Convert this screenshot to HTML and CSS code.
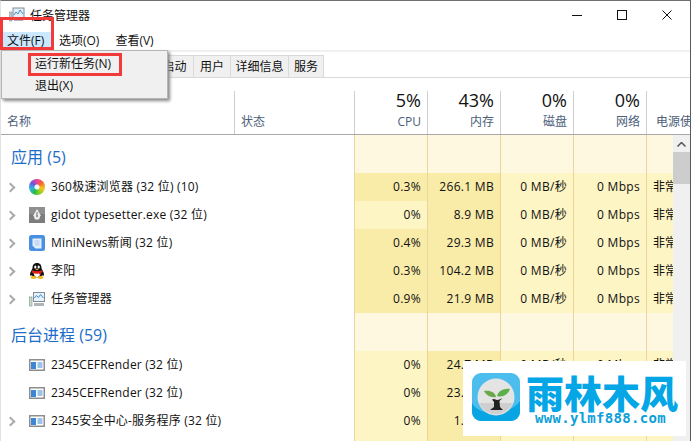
FILE: index.html
```html
<!DOCTYPE html>
<html lang="zh-CN">
<head>
    <meta charset="UTF-8">
    <meta name="viewport" content="width=device-width, initial-scale=1.0">
    <title>任务管理器</title>
    <link rel="stylesheet" href="styles.css">
</head>
<body>
<div class="window">
    <div class="title-bar">
        <svg class="app-icon" width="16" height="16" viewBox="0 0 16 16">
            <rect x="4" y="1" width="11" height="10" fill="#e4eef6" stroke="#7f8c99"/>
            <path d="M5 8l2-3 2 2 2-4 3 4" fill="none" stroke="#3f8fd0"/>
            <rect x="0" y="5" width="3" height="9" fill="#c3c7cb" stroke="#7f8c99" stroke-width=".6"/>
            <rect x="5" y="12" width="9" height="2" fill="#b0b6bc"/>
        </svg>
        <span class="title-text">任务管理器</span>
        <div class="win-btns">
            <svg width="10" height="10" viewBox="0 0 10 10"><path d="M0 5.5h10" stroke="#111"/></svg>
            <svg width="10" height="10" viewBox="0 0 10 10"><rect x=".5" y=".5" width="9" height="9" fill="none" stroke="#111"/></svg>
            <svg width="10" height="10" viewBox="0 0 10 10"><path d="M.5 .5l9 9M9.5 .5l-9 9" stroke="#111"/></svg>
        </div>
    </div>

    <div class="menu-bar">
        <span class="menu-item menu-open">文件(F)</span>
        <span class="menu-item">选项(O)</span>
        <span class="menu-item">查看(V)</span>
    </div>

    <div class="tabs">
        <span class="tab">进程</span>
        <span class="tab">性能</span>
        <span class="tab">应用历史</span>
        <span class="tab">启动</span>
        <span class="tab">用户</span>
        <span class="tab">详细信息</span>
        <span class="tab">服务</span>
    </div>

    <div class="table-head">
        <div class="head-cell head-name">名称</div>
        <div class="head-cell head-status">状态</div>
        <div class="head-cell head-num"><b>5%</b>CPU</div>
        <div class="head-cell head-num"><b>43%</b>内存</div>
        <div class="head-cell head-num"><b>0%</b>磁盘</div>
        <div class="head-cell head-num"><b>0%</b>网络</div>
        <div class="head-cell head-power">电源使用情况</div>
    </div>

    <div class="table-wrap">
        <div class="rows">
            <div class="row group-row">
                <div class="name group-title">应用 (5)</div>
                <div></div>
                <div class="num"></div><div class="num"></div><div class="num"></div><div class="num"></div><div class="num"></div>
            </div>

            <div class="row">
                <div class="name"><i class="arrow"></i>
                    <span class="icon-360"></span>
                    <span class="label">360极速浏览器 (32 位) (10)</span></div>
                <div></div>
                <div class="num hot">0.3%</div><div class="num hot">266.1 MB</div><div class="num">0 MB/秒</div><div class="num">0 Mbps</div><div class="num power">非常低</div>
            </div>
            <div class="row">
                <div class="name"><i class="arrow"></i>
                    <svg class="icon" width="16" height="16" viewBox="0 0 16 16">
                        <rect width="16" height="16" fill="#7d7d7d"/>
                        <rect width="16" height="7" fill="#8f8f8f"/>
                        <path d="M8 2l3.600 6.200L10 12.500H6L4.400 8.200z" fill="#eee"/>
                        <path d="M8 5v3" stroke="#777"/><circle cx="8" cy="9" r="1" fill="#777"/>
                    </svg>
                    <span class="label">gidot typesetter.exe (32 位)</span></div>
                <div></div>
                <div class="num">0%</div><div class="num hot">8.9 MB</div><div class="num">0 MB/秒</div><div class="num">0 Mbps</div><div class="num power">非常低</div>
            </div>
            <div class="row">
                <div class="name"><i class="arrow"></i>
                    <svg class="icon" width="16" height="16" viewBox="0 0 16 16">
                        <rect width="16" height="16" rx="2.500" fill="#4a90e2"/>
                        <path d="M3.500 3.500h9v10h-6l-3-3z" fill="#e3eefb"/>
                        <path d="M5.500 6h5M5.500 8h5M6 10h4.500" stroke="#a9c7ee"/>
                    </svg>
                    <span class="label">MiniNews新闻 (32 位)</span></div>
                <div></div>
                <div class="num hot">0.4%</div><div class="num hot">29.3 MB</div><div class="num">0 MB/秒</div><div class="num">0 Mbps</div><div class="num power">非常低</div>
            </div>
            <div class="row">
                <div class="name"><i class="arrow"></i>
                    <svg class="icon" width="16" height="16" viewBox="0 0 16 16">
                        <path d="M8 0C4.500 0 3.500 2.500 3.500 5 3.500 6.500 1 8.500 1 11.500c0 1.500 1 1.500 1.800.8C4.500 15 11.500 15 13.200 12.300c.8.700 1.800.7 1.800-.8 0-3-2.500-5-2.500-6.500C12.500 2.500 11.500 0 8 0z" fill="#111"/>
                        <path d="M5 9c-.6 2.200.3 5 3 5s3.600-2.800 3-5z" fill="#fff"/>
                        <path d="M2.800 7.300c3.400 1.400 7 1.400 10.400 0l.5 1.700-2.200 1 .4 2.500-2.200-2c-2.400.5-4.800.3-7-1z" fill="#e0201c"/>
                        <ellipse cx="6.300" cy="4" rx="1.100" ry="1.500" fill="#fff"/><ellipse cx="9.700" cy="4" rx="1.100" ry="1.500" fill="#fff"/>
                        <path d="M5.800 5.800h4.400L8 7.200z" fill="#f5b81c"/>
                        <ellipse cx="4.500" cy="14.500" rx="3" ry="1.400" fill="#f5b81c"/><ellipse cx="11.500" cy="14.500" rx="3" ry="1.400" fill="#f5b81c"/>
                    </svg>
                    <span class="label">李阳</span></div>
                <div></div>
                <div class="num hot">0.3%</div><div class="num hot">104.2 MB</div><div class="num">0 MB/秒</div><div class="num">0 Mbps</div><div class="num power">非常低</div>
            </div>
            <div class="row">
                <div class="name"><i class="arrow"></i>
                    <svg class="icon" width="16" height="16" viewBox="0 0 16 16">
                        <rect x="4.500" y="1.500" width="11" height="9" fill="#e8f1f8" stroke="#7f8c99"/>
                        <path d="M5.500 7l2-2.500 2 2 2-3 3 3.500" fill="none" stroke="#3f8fd0"/>
                        <rect x=".5" y="6" width="2.500" height="9" fill="#c6e0c0" stroke="#7f8c99" stroke-width=".6"/>
                        <rect x="5" y="12" width="10" height="3" fill="#aeb4ba"/>
                    </svg>
                    <span class="label">任务管理器</span></div>
                <div></div>
                <div class="num hot">0.9%</div><div class="num hot">21.9 MB</div><div class="num">0 MB/秒</div><div class="num">0 Mbps</div><div class="num power">非常低</div>
            </div>

            <div class="row group-row">
                <div class="name group-title">后台进程 (59)</div>
                <div></div>
                <div class="num"></div><div class="num"></div><div class="num"></div><div class="num"></div><div class="num"></div>
            </div>

            <div class="row">
                <div class="name"><i class="arrow arrow-none"></i>
                    <svg class="icon" width="16" height="16" viewBox="0 0 16 16"><use href="#proc"/></svg>
                    <span class="label">2345CEFRender (32 位)</span></div>
                <div></div>
                <div class="num">0%</div><div class="num hot">24.7 MB</div><div class="num">0 MB/秒</div><div class="num">0 Mbps</div><div class="num power">非常低</div>
            </div>
            <div class="row">
                <div class="name"><i class="arrow arrow-none"></i>
                    <svg class="icon" width="16" height="16" viewBox="0 0 16 16"><use href="#proc"/></svg>
                    <span class="label">2345CEFRender (32 位)</span></div>
                <div></div>
                <div class="num">0%</div><div class="num hot">23.1 MB</div><div class="num">0 MB/秒</div><div class="num">0 Mbps</div><div class="num power">非常低</div>
            </div>
            <div class="row">
                <div class="name"><i class="arrow"></i>
                    <svg class="icon" width="16" height="16" viewBox="0 0 16 16"><use href="#proc"/></svg>
                    <span class="label">2345安全中心-服务程序 (32 位)</span></div>
                <div></div>
                <div class="num">0%</div><div class="num hot">1.2 MB</div><div class="num">0 MB/秒</div><div class="num">0 Mbps</div><div class="num power">非常低</div>
            </div>
            <div class="row">
                <div class="name"></div>
                <div></div>
                <div class="num"></div><div class="num hot"></div><div class="num"></div><div class="num"></div><div class="num"></div>
            </div>
        </div>

        <div class="scrollbar">
            <svg class="scroll-up" width="9" height="5" viewBox="0 0 9 5"><path d="M.5 4.500l4-4 4 4" fill="none" stroke="#555" stroke-width="1.500"/></svg>
            <div class="scroll-thumb"></div>
        </div>
    </div>
</div>

<svg class="defs" width="0" height="0">
    <symbol id="proc" viewBox="0 0 16 16">
        <rect y="2" width="16" height="12" fill="#8e8e8e"/>
        <rect x="1.500" y="3.500" width="13" height="9" fill="#fff"/>
        <rect x="2" y="5" width="5" height="7" fill="#3b87d4"/>
        <path d="M8.500 6h5M8.500 8h5M8.500 10h5" stroke="#3b87d4"/>
    </symbol>
</svg>

<div class="dropdown">
    <div class="drop-item">运行新任务(N)</div>
    <div class="drop-item">退出(X)</div>
</div>
<div class="red-box red-menu"></div>
<div class="red-box red-item"></div>

<div class="watermark">
    <svg class="wm-logo" width="48" height="48" viewBox="0 0 48 48">
        <rect width="48" height="48" rx="9" fill="#4dbdee"/>
        <path d="M0 30c8 14 36 14 48-2v11a9 9 0 0 1-9 9H9a9 9 0 0 1-9-9z" fill="#08a5e3"/>
        <circle cx="24" cy="24" r="18.500" fill="#e4e4e4"/>
        <path d="M7 30a18.500 18.500 0 0 0 34 0z" fill="#cfcfcf"/>
        <path d="M18 37h13l-3-3-.5-6 3-3-3 1.500-2.500.5-3-1-2 .5 2 2.500v5z" fill="#222"/>
        <path d="M24 24c-1-5-6-7-12-6 2 4 7 7 12 6z" fill="#6aa84a"/>
        <path d="M25 23c1-5 7-8 13-7-2 5-7 9-13 7z" fill="#5cb04a"/>
    </svg>
    <div class="wm-text">
        <div class="wm-name">雨林木风</div>
        <div class="wm-url">www.ylmf888.com</div>
    </div>
</div>
</body>
</html>
```

FILE: styles.css
```css
* { box-sizing: border-box; }
html, body { margin: 0; height: 100%; overflow: hidden; }
body { background: #fff; color: #111; font: 12px "Open Sans", "Noto Sans CJK SC", sans-serif; }

.window { height: 441px; border-top: 1px solid #6f6f6f; border-left: 1px solid #e2e2e2; border-right: 1px solid #5a5a5a; overflow: hidden; }

.title-bar { height: 29px; display: flex; align-items: center; padding: 0 0 1px 8px; }
.app-icon { margin-right: 5px; }
.title-text { flex: 1; font-size: 12px; }
.win-btns { display: flex; gap: 35px; margin-right: 18px; }

.menu-bar { height: 20px; display: flex; align-items: center; padding-top: 1px; }
.menu-item { padding: 0 6px; line-height: 17px; margin-right: 4px; }
.menu-open { background: #cce8ff; width: 50px; margin-right: 2px; }

.tabs { height: 28px; border-top: 2px solid #f0f0f0; border-bottom: 1px solid #d9d9d9; padding-top: 3px; display: grid; grid-template-columns: 38px 38px 78px 38px 37px 58px 35px; }
.tab { background: #f0f0f0; border: 1px solid #d9d9d9; border-bottom: 0; margin-right: -1px; text-align: center; line-height: 21px; }

.table-head { height: 57px; padding-top: 13px; border-bottom: 1px solid #a8a8a8; display: grid; grid-template-columns: 234px 120px 73px 73px 73px 73px 1fr; }
.head-cell { border-right: 1px solid #cfcfcf; color: #4c607a; }
.head-name, .head-status, .head-power { padding-top: 22px; line-height: 17px; white-space: nowrap; overflow: hidden; }
.head-name { padding-left: 6px; }
.head-status { padding-left: 6px; }
.head-power { border-right: 0; padding-left: 9px; }
.head-num { text-align: right; padding-right: 6px; line-height: 17px; }
.head-num b { display: block; font-weight: 400; font-size: 18px; line-height: 18px; color: #111; height: 22px; }

.table-wrap { display: flex; height: 306px; }
.rows { width: 672px; overflow: hidden; }
.row { height: 28px; display: grid; grid-template-columns: 233px 120px 73px 73px 73px 73px 27px; line-height: 28px; }
.group-row { height: 38px; }
.group-row .num { background: #fff8e1; }
.name { display: flex; align-items: center; white-space: nowrap; overflow: hidden; }
.group-title { color: #1c6dc9; font-size: 16px; padding-left: 10px; line-height: 38px; padding-top: 6px; }
.arrow { width: 7px; height: 7px; margin-left: 6px; margin-right: 15px; border-top: 2px solid #ababab; border-right: 2px solid #ababab; transform: rotate(45deg); flex: none; }
.arrow-none { visibility: hidden; }
.icon { flex: none; }
.icon-360 { flex: none; width: 16px; height: 16px; border-radius: 50%; background: radial-gradient(circle, #fff 0 2px, transparent 3px), conic-gradient(#f0409a, #f36b2b, #f9c520, #8ed120, #27b94d, #2fb5e8, #6a55e0, #f0409a); }
.label { margin-left: 6px; letter-spacing: .2px; }
.num { background: #fef5c5; border-left: 1px solid #ecd59a; text-align: right; padding-right: 6px; white-space: nowrap; overflow: hidden; letter-spacing: .3px; }
.hot { background: #f9eba8; }
.power { text-align: left; padding-left: 6px; padding-right: 0; letter-spacing: 0; }

.scrollbar { width: 17px; background: #f0f0f0; position: relative; padding-top: 17px; }
.scroll-up { position: absolute; left: 4px; top: 7px; }
.scroll-thumb { height: 32px; background: #cdcdcd; }

.defs { position: absolute; }

.dropdown { position: absolute; left: 1px; top: 50px; width: 167px; height: 49px; background: #f0f0f0; border: 1px solid #b5b5b5; box-shadow: 2px 2px 3px #888; padding: 2px 0 0 33px; }
.drop-item { height: 22px; line-height: 22px; }
.red-box { position: absolute; border: 3px solid #f33a3a; }
.red-menu { left: 0; top: 17px; width: 54px; height: 33px; }
.red-item { left: 28px; top: 53px; width: 94px; height: 23px; }

.watermark { position: absolute; left: 463px; top: 361px; width: 223px; height: 75px; background: #fff; display: flex; padding: 12px 0 0 9px; }
.wm-logo { flex: none; }
.wm-text { margin-left: 6px; }
.wm-name { font: 900 38px/38px "Noto Sans CJK SC", sans-serif; color: #04a6e6; white-space: nowrap; }
.wm-url { font: 700 14px/14px "DejaVu Sans Mono", monospace; color: #0e9fd8; margin-left: 9px; letter-spacing: .3px; white-space: nowrap; }
```
